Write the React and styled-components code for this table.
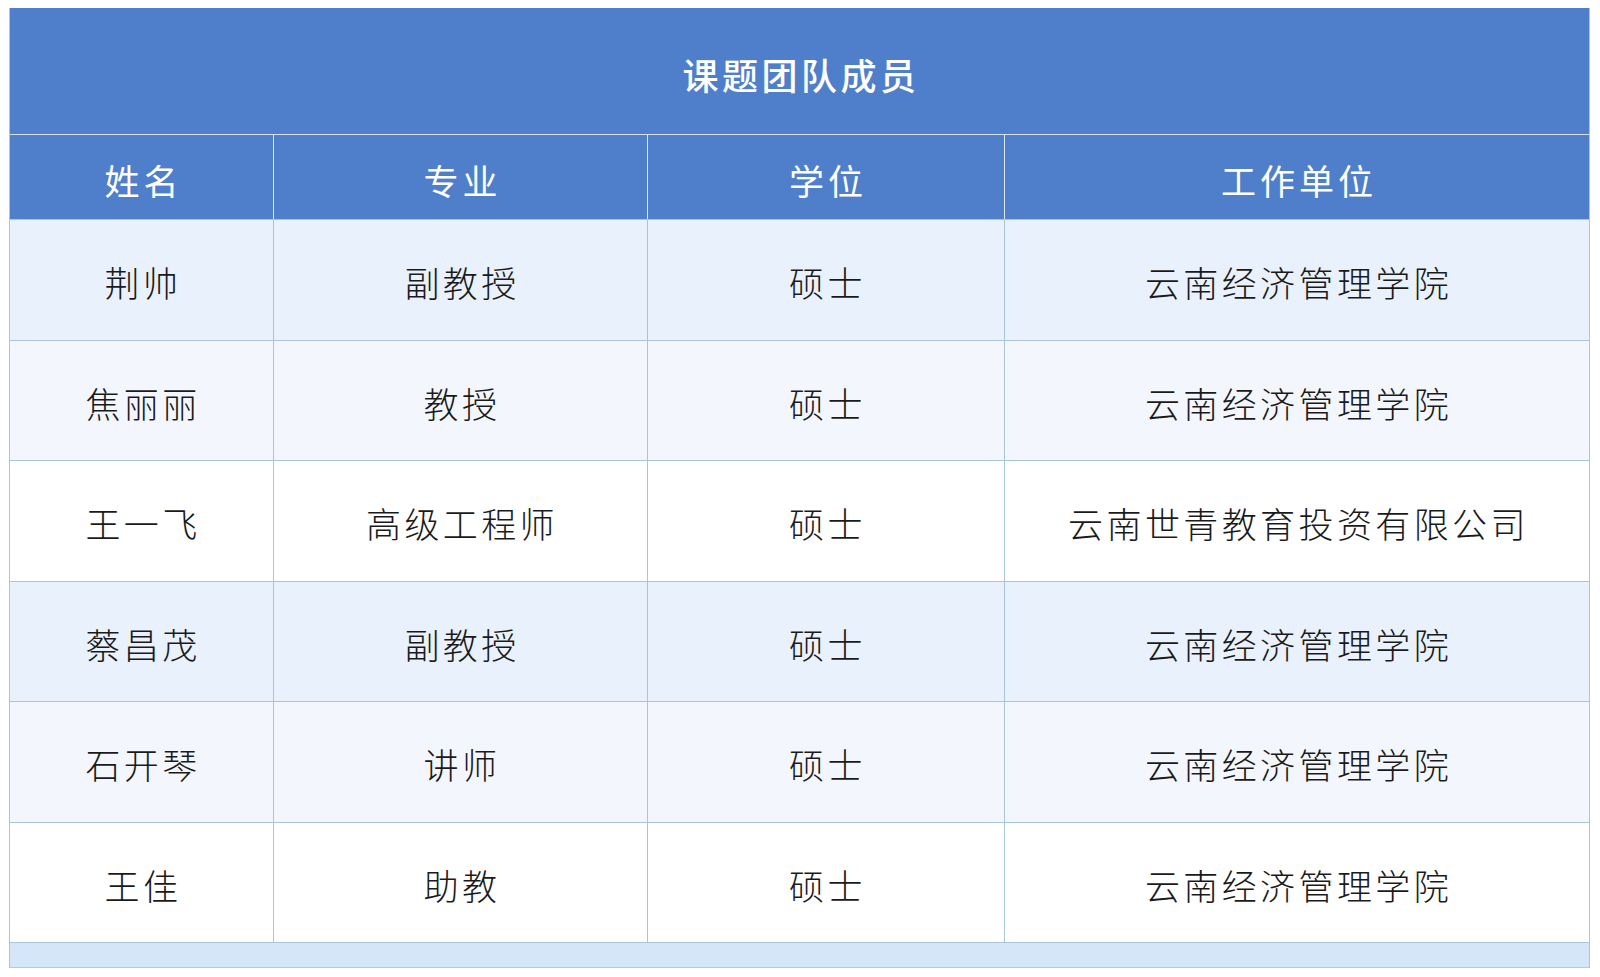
import React from "react";
import styled, { createGlobalStyle } from "styled-components";

const Global = createGlobalStyle`
  html, body { margin: 0; padding: 0; background: #ffffff; }
  body { font-family: "Noto Sans CJK SC", "Noto Sans", sans-serif; }
`;

const Page = styled.div`
  padding: 8px 10px 0 9px;
`;

const Table = styled.div`
  width: 1581px;
  box-sizing: border-box;
  border-left: 1px solid #a9c5da;
  border-right: 1px solid #a9c5da;
`;

const TitleBar = styled.div`
  height: 127px;
  box-sizing: border-box;
  background: #4f7fcb;
  color: #ffffff;
  display: flex;
  align-items: center;
  justify-content: center;
  padding: 6px 0 0 3px;
  font-size: 36px;
  font-weight: 500;
  letter-spacing: 3.5px;
  border-bottom: 1px solid #d4e1f3;
`;

const cols = "264px 374px 357px 1fr";

const HeadRow = styled.div`
  display: grid;
  grid-template-columns: ${cols};
  height: 85px;
  background: #4f7fcb;
  border-bottom: 1px solid #a9c5da;
  box-sizing: border-box;
`;

const HeadCell = styled.div`
  display: flex;
  align-items: center;
  justify-content: center;
  padding: 4px 0 0 4px;
  color: #ffffff;
  font-size: 35px;
  letter-spacing: 4px;
  border-right: ${(p) => (p.$last ? "none" : "1px solid #dbe6f5")};
`;

const bgs = ["#e8f1fc", "#f3f7fd", "#ffffff"];

const Row = styled.div`
  display: grid;
  grid-template-columns: ${cols};
  height: 120.5px;
  box-sizing: border-box;
  background: ${(p) => bgs[p.$i % 3]};
  border-bottom: 1px solid #a9c5da;
`;

const Cell = styled.div`
  display: flex;
  align-items: center;
  justify-content: center;
  padding: 4px 0 0 3px;
  color: #1a1a1a;
  font-size: 35px;
  font-weight: 300;
  letter-spacing: 3.4px;
  border-right: ${(p) => (p.$last ? "none" : "1px solid #a9c5da")};
`;

const Footer = styled.div`
  height: 24px;
  background: #d6e6f9;
  border-bottom: 1px solid #b5cadc;
`;

const rows = [
  ["荆帅", "副教授", "硕士", "云南经济管理学院"],
  ["焦丽丽", "教授", "硕士", "云南经济管理学院"],
  ["王一飞", "高级工程师", "硕士", "云南世青教育投资有限公司"],
  ["蔡昌茂", "副教授", "硕士", "云南经济管理学院"],
  ["石开琴", "讲师", "硕士", "云南经济管理学院"],
  ["王佳", "助教", "硕士", "云南经济管理学院"],
];

const heads = ["姓名", "专业", "学位", "工作单位"];

export default function App() {
  return (
    <>
      <Global />
      <Page>
        <Table>
          <TitleBar>课题团队成员</TitleBar>
          <HeadRow>
            {heads.map((h, i) => (
              <HeadCell key={h} $last={i === heads.length - 1}>
                {h}
              </HeadCell>
            ))}
          </HeadRow>
          {rows.map((r, i) => (
            <Row key={i} $i={i}>
              {r.map((c, j) => (
                <Cell key={j} $last={j === r.length - 1}>
                  {c}
                </Cell>
              ))}
            </Row>
          ))}
          <Footer />
        </Table>
      </Page>
    </>
  );
}
